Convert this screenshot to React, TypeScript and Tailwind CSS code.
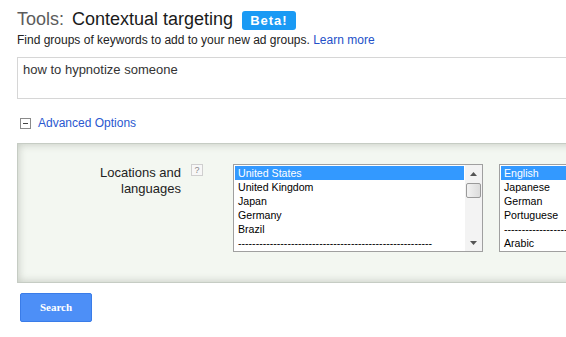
import React from 'react';

const LOCATIONS = [
  'United States',
  'United Kingdom',
  'Japan',
  'Germany',
  'Brazil',
  '-------------------------------------------------------',
];

const LANGUAGES = [
  'English',
  'Japanese',
  'German',
  'Portuguese',
  '----------------------------------------------------------------',
  'Arabic',
];

function ListBox({ items, width, scroll }: { items: string[]; width: string; scroll?: boolean }) {
  return (
    <div className={`flex h-[88px] shrink-0 border border-[#a0a0a0] bg-white ${width}`}>
      <div className="flex-1 overflow-hidden p-[1px]">
        {items.map((item, i) => (
          <div
            key={item + i}
            className={`h-[14px] overflow-hidden whitespace-nowrap pl-[3px] text-[10.6px] leading-[14px] ${
              i === 0 ? 'bg-[#3399ff] text-white' : 'text-black'
            }`}
          >
            {item}
          </div>
        ))}
      </div>
      {scroll && (
        <div className="flex w-[17px] flex-col items-center bg-[#f3f3f3]">
          <div className="flex h-[17px] w-full items-center justify-center">
            <svg width="7" height="4" viewBox="0 0 7 4">
              <path d="M0 4 L3.5 0 L7 4 Z" fill="#555" />
            </svg>
          </div>
          <div className="mt-[1px] h-[15px] w-[15px] rounded-[2px] border border-[#9a9a9a] bg-gradient-to-r from-[#f2f2f2] to-[#dcdcdc]" />
          <div className="flex-1" />
          <div className="flex h-[17px] w-full items-center justify-center">
            <svg width="7" height="4" viewBox="0 0 7 4">
              <path d="M0 0 L3.5 4 L7 0 Z" fill="#555" />
            </svg>
          </div>
        </div>
      )}
    </div>
  );
}

export default function App() {
  return (
    <div className="h-[337px] w-full overflow-hidden bg-white font-['Liberation_Sans',Arial,sans-serif]">
      <div className="w-[760px] pl-[17px] pt-[8px]">
        {/* Title */}
        <div className="flex items-start text-[18px] leading-[22px]">
          <span className="text-[#5c5c5c]">Tools:</span>
          <span className="ml-[8px] text-[#1a1a1a]">Contextual targeting</span>
          <span className="ml-[9px] mt-[3px] h-[19px] rounded-[3px] bg-[#1a9af4] px-[8px] text-[13px] font-bold leading-[19px] tracking-[1px] text-white">
            Beta!
          </span>
        </div>
        <p className="mt-[3px] text-[12px] leading-[15px] text-[#222]">
          Find groups of keywords to add to your new ad groups.{' '}
          <span className="text-[#2350c8]">Learn more</span>
        </p>

        {/* Keyword box */}
        <div className="mt-[9px] h-[42px] w-[700px] border border-[#d6d6d6] bg-white pl-[5px] pt-[4px] text-[13px] leading-[15px] text-[#333]">
          how to hypnotize someone
        </div>

        {/* Advanced toggle */}
        <div className="mt-[17px] flex items-center leading-[15px]">
          <div className="ml-[3px] flex h-[11px] w-[11px] items-center justify-center border border-[#8a8a8a] bg-white">
            <div className="h-[1px] w-[5px] bg-[#444]" />
          </div>
          <span className="ml-[7px] text-[12px] text-[#2a58d0]">Advanced Options</span>
        </div>

        {/* Advanced panel */}
        <div className="mt-[12px] flex h-[140px] w-[700px] border border-[#c6ccc4] bg-[#f3f7f1] pt-[20px] shadow-[inset_0_0_8px_rgba(60,70,55,0.28)]">
          <div className="w-[163px] shrink-0 pt-[1px] text-right text-[13px] leading-[16px] text-[#222]">
            Locations and
            <br />
            languages
          </div>
          <div className="ml-[10px] mt-[0px] flex h-[12px] w-[12px] shrink-0 items-center justify-center border border-[#cfcfcf] bg-[#f7f7f7] text-[9px] leading-none text-[#888]">
            ?
          </div>
          <div className="ml-[30px]">
            <ListBox items={LOCATIONS} width="w-[250px]" scroll />
          </div>
          <div className="ml-[16px]">
            <ListBox items={LANGUAGES} width="w-[200px]" />
          </div>
        </div>

        {/* Search button */}
        <button className="mt-[10px] ml-[3px] h-[29px] w-[72px] rounded-[2px] border border-[#3a7ce8] bg-[#4d8ff7] font-['Liberation_Serif',serif] text-[11px] font-bold text-white">
          Search
        </button>
      </div>
    </div>
  );
}
